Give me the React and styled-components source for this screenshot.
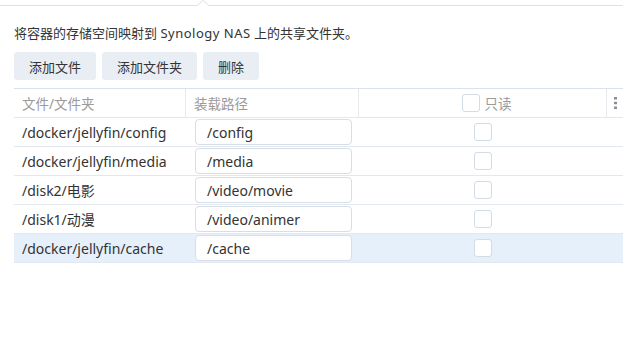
import React from "react";
import styled, { createGlobalStyle } from "styled-components";

const Global = createGlobalStyle`
  html, body { margin: 0; padding: 0; background: #fff; }
  body { font-family: "Noto Sans", "Noto Sans CJK SC", sans-serif; color: #333; }
`;

const Page = styled.div`
  width: 630px;
  height: 343px;
  background: #fff;
`;

const TabLine = styled.div`
  position: relative;
  height: 5px;
  border-bottom: 1px solid #dbe2ea;
  margin-right: 7px;
  &::before, &::after {
    content: "";
    position: absolute;
    left: 196px;
    width: 0;
    height: 0;
    border-left: 7px solid transparent;
    border-right: 7px solid transparent;
  }
  &::before { border-bottom: 6px solid #dbe2ea; bottom: -1px; }
  &::after { border-bottom: 6px solid #fff; bottom: -2px; }
`;

const Content = styled.div`
  padding: 0 7px 0 14px;
`;

const Desc = styled.div`
  margin-top: 18px;
  font-size: 13px;
  line-height: 18px;
  color: #333;
`;

const Latin = styled.span`
  letter-spacing: 0.5px;
`;

const Toolbar = styled.div`
  display: flex;
  gap: 6px;
  margin-top: 10px;
`;

const Button = styled.button`
  height: 28px;
  padding: 0 15px;
  border: none;
  border-radius: 3px;
  background: #e9eef4;
  color: #333;
  font-family: inherit;
  font-size: 13px;
`;

const Table = styled.div`
  margin-top: 8px;
  border-top: 1px solid #dbe2ea;
`;

const Row = styled.div`
  display: grid;
  grid-template-columns: 172px 173px 248px 16px;
  height: 28px;
  border-bottom: 1px solid #e3e8ee;
  background: ${(p) => (p.$selected ? "#e6f0fb" : "#fff")};
  align-items: center;
`;

const HeadCell = styled.div`
  height: 100%;
  display: flex;
  align-items: center;
  justify-content: ${(p) => (p.$center ? "center" : "flex-start")};
  gap: 5px;
  padding-left: ${(p) => p.$pl ?? 8}px;
  border-right: ${(p) => (p.$last ? "none" : "1px solid #e6e9ed")};
  font-size: 13.5px;
  color: #9a9a9a;
  box-sizing: border-box;
`;

const Cell = styled.div`
  height: 100%;
  display: flex;
  align-items: center;
  justify-content: ${(p) => (p.$center ? "center" : "flex-start")};
  padding-left: ${(p) => p.$pl ?? 8}px;
  font-size: 14px;
  color: #333;
  box-sizing: border-box;
`;

const Input = styled.div`
  width: 157px;
  height: 26px;
  box-sizing: border-box;
  border: 1px solid #d6dee7;
  border-radius: 4px;
  background: #fff;
  padding-left: 11px;
  display: flex;
  align-items: center;
  font-size: 14px;
  color: #333;
`;

const Check = styled.span`
  display: inline-block;
  width: 18px;
  height: 18px;
  box-sizing: border-box;
  border: 1px solid #d3dbe4;
  border-radius: 3px;
  background: #fff;
`;

const Dots = styled.svg`
  display: block;
`;

const rows = [
  ["/docker/jellyfin/config", "/config"],
  ["/docker/jellyfin/media", "/media"],
  ["/disk2/电影", "/video/movie"],
  ["/disk1/动漫", "/video/animer"],
  ["/docker/jellyfin/cache", "/cache"],
];

export default function App() {
  return (
    <Page>
      <Global />
      <TabLine />
      <Content>
        <Desc>
          将容器的存储空间映射到 <Latin>Synology NAS</Latin> 上的共享文件夹。
        </Desc>
        <Toolbar>
          <Button>添加文件</Button>
          <Button>添加文件夹</Button>
          <Button>删除</Button>
        </Toolbar>
        <Table>
          <Row>
            <HeadCell>文件/文件夹</HeadCell>
            <HeadCell>装载路径</HeadCell>
            <HeadCell $center $pl={8}>
              <Check />
              只读
            </HeadCell>
            <HeadCell $last $center $pl={0}>
              <Dots width="3" height="12" viewBox="0 0 3 12">
                <rect x="0" y="0" width="3" height="2.5" fill="#8a8f96" />
                <rect x="0" y="4.75" width="3" height="2.5" fill="#8a8f96" />
                <rect x="0" y="9.5" width="3" height="2.5" fill="#8a8f96" />
              </Dots>
            </HeadCell>
          </Row>
          {rows.map(([src, mount], i) => (
            <Row key={src} $selected={i === rows.length - 1}>
              <Cell>{src}</Cell>
              <Cell $pl={9}>
                <Input>{mount}</Input>
              </Cell>
              <Cell $center $pl={0}>
                <Check />
              </Cell>
              <Cell />
            </Row>
          ))}
        </Table>
      </Content>
    </Page>
  );
}
